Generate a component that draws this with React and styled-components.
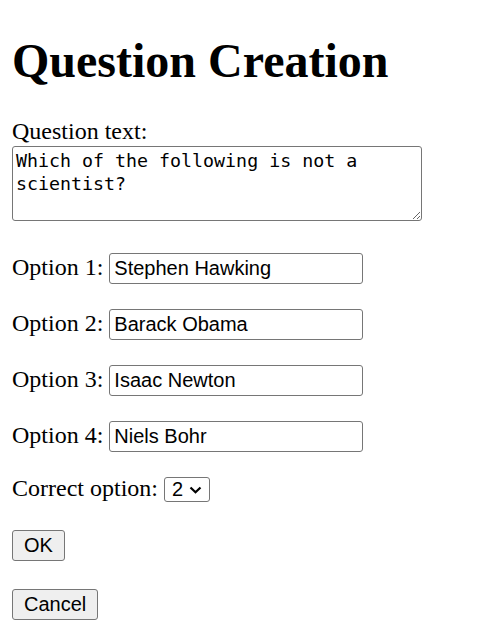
import React from "react";
import styled, { createGlobalStyle } from "styled-components";

const GlobalStyle = createGlobalStyle`
  body {
    margin: 0;
    background: #ffffff;
    color: #000000;
    font-family: "Liberation Serif", "Times New Roman", serif;
    font-size: 24px;
  }
`;

const StyledPage = styled.div`
  display: flex;
  flex-direction: column;
  align-items: flex-start;
  padding: 32.5px 12px 12px;
`;

const StyledTitle = styled.h1`
  margin: 0;
  font-size: 48px;
  line-height: 55px;
  font-weight: bold;
`;

const StyledBlockLabel = styled.label`
  display: block;
  margin-top: 30px;
  line-height: 27px;
`;

const StyledTextArea = styled.textarea`
  box-sizing: border-box;
  margin-top: 1px;
  width: 410px;
  height: 75.5px;
  padding: 2px 3px;
  border: 1px solid #767676;
  border-radius: 3px;
  font-family: "DejaVu Sans Mono", "Liberation Mono", monospace;
  font-size: 18.3px;
  line-height: 23px;
  color: #000000;
  background: #ffffff;
  outline: none;
`;

const StyledRow = styled.div`
  display: flex;
  align-items: baseline;
  gap: 6px;
  margin-top: ${(p) => p.$top}px;
`;

const StyledRowLabel = styled.label`
  line-height: 27px;
  white-space: nowrap;
`;

const StyledInput = styled.input`
  box-sizing: border-box;
  width: 254px;
  height: 31px;
  margin: 0;
  padding: 0 4px;
  border: 1px solid #767676;
  border-radius: 3px;
  font-family: "Liberation Sans", Arial, sans-serif;
  font-size: 20px;
  color: #000000;
  background: #ffffff;
  outline: none;
`;

const StyledSelectWrap = styled.span`
  position: relative;
  display: inline-flex;
`;

const StyledSelect = styled.select`
  appearance: none;
  box-sizing: border-box;
  width: 46px;
  height: 25px;
  margin: 0;
  padding: 0 0 0 7px;
  border: 1px solid #767676;
  border-radius: 3px;
  font-family: "Liberation Sans", Arial, sans-serif;
  font-size: 20px;
  line-height: 23px;
  color: #000000;
  background: #ffffff;
  outline: none;
`;

const StyledChevron = styled.svg`
  position: absolute;
  left: 25.5px;
  top: 9px;
  pointer-events: none;
`;

const StyledButton = styled.button`
  box-sizing: border-box;
  margin-top: 28px;
  height: 31px;
  padding: 0 11px;
  border: 1px solid #767676;
  border-radius: 3px;
  background: #efefef;
  font-family: "Liberation Sans", Arial, sans-serif;
  font-size: 20px;
  line-height: 23px;
  color: #000000;
`;

const options = [
  "Stephen Hawking",
  "Barack Obama",
  "Isaac Newton",
  "Niels Bohr",
];

export default function App() {
  return (
    <>
      <GlobalStyle />
      <StyledPage>
        <StyledTitle>Question Creation</StyledTitle>
        <StyledBlockLabel htmlFor="question">Question text:</StyledBlockLabel>
        <StyledTextArea
          id="question"
          defaultValue="Which of the following is not a scientist?"
        />
        {options.map((text, i) => (
          <StyledRow key={i} $top={i === 0 ? 32 : 25}>
            <StyledRowLabel>Option {i + 1}:</StyledRowLabel>
            <StyledInput type="text" defaultValue={text} />
          </StyledRow>
        ))}
        <StyledRow $top={23}>
          <StyledRowLabel>Correct option:</StyledRowLabel>
          <StyledSelectWrap>
            <StyledSelect defaultValue="2">
              <option value="1">1</option>
              <option value="2">2</option>
              <option value="3">3</option>
              <option value="4">4</option>
            </StyledSelect>
            <StyledChevron width="13" height="8" viewBox="0 0 13 8">
              <polyline
                points="1.5,1.5 6.5,6.3 11.5,1.5"
                fill="none"
                stroke="#000"
                strokeWidth="2.2"
              />
            </StyledChevron>
          </StyledSelectWrap>
        </StyledRow>
        <StyledButton type="button">OK</StyledButton>
        <StyledButton type="button">Cancel</StyledButton>
      </StyledPage>
    </>
  );
}
